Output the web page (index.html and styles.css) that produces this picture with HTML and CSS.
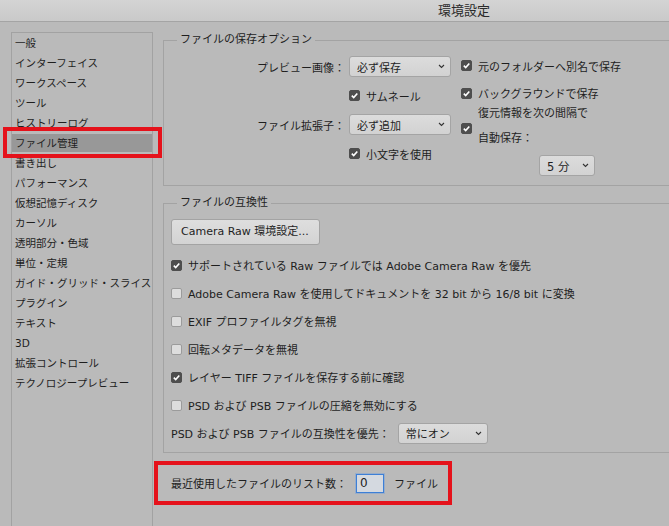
FILE: index.html
```html
<!DOCTYPE html>
<html>
<head>
    <title>環境設定</title>
    <link rel="stylesheet" href="styles.css">
</head>
<body>
    <div class="titlebar"><span class="title">環境設定</span></div>
    <div class="main">
        <ul class="sidebar">
            <li>一般</li>
            <li>インターフェイス</li>
            <li>ワークスペース</li>
            <li>ツール</li>
            <li>ヒストリーログ</li>
            <li class="active">ファイル管理</li>
            <li>書き出し</li>
            <li>パフォーマンス</li>
            <li>仮想記憶ディスク</li>
            <li>カーソル</li>
            <li>透明部分・色域</li>
            <li>単位・定規</li>
            <li>ガイド・グリッド・スライス</li>
            <li>プラグイン</li>
            <li>テキスト</li>
            <li>3D</li>
            <li>拡張コントロール</li>
            <li>テクノロジープレビュー</li>
        </ul>

        <div class="content">
            <!-- save options -->
            <fieldset class="group">
                <legend>ファイルの保存オプション</legend>
                <div class="save-body">
                    <div class="save-left">
                        <span class="field-label">プレビュー画像：</span>
                        <div class="select"><span>必ず保存</span><svg class="chev" width="7" height="5" viewBox="0 0 7 5"><path d="M1 1l2.5 2.5L6 1" fill="none" stroke="#333" stroke-width="1.1"/></svg></div>
                        <span></span>
                        <label class="check"><span class="box on"><svg width="11" height="11" viewBox="0 0 11 11"><path d="M2.8 5.6l1.9 1.9 3.6-4" fill="none" stroke="#fff" stroke-width="1.6"/></svg></span>サムネール</label>
                        <span class="field-label">ファイル拡張子：</span>
                        <div class="select"><span>必ず追加</span><svg class="chev" width="7" height="5" viewBox="0 0 7 5"><path d="M1 1l2.5 2.5L6 1" fill="none" stroke="#333" stroke-width="1.1"/></svg></div>
                        <span></span>
                        <label class="check"><span class="box on"><svg width="11" height="11" viewBox="0 0 11 11"><path d="M2.8 5.6l1.9 1.9 3.6-4" fill="none" stroke="#fff" stroke-width="1.6"/></svg></span>小文字を使用</label>
                    </div>
                    <div class="save-right">
                        <label class="check r1"><span class="box on"><svg width="11" height="11" viewBox="0 0 11 11"><path d="M2.8 5.6l1.9 1.9 3.6-4" fill="none" stroke="#fff" stroke-width="1.6"/></svg></span>元のフォルダーへ別名で保存</label>
                        <label class="check r2"><span class="box on"><svg width="11" height="11" viewBox="0 0 11 11"><path d="M2.8 5.6l1.9 1.9 3.6-4" fill="none" stroke="#fff" stroke-width="1.6"/></svg></span>バックグラウンドで保存</label>
                        <label class="check r3"><span class="box on"><svg width="11" height="11" viewBox="0 0 11 11"><path d="M2.8 5.6l1.9 1.9 3.6-4" fill="none" stroke="#fff" stroke-width="1.6"/></svg></span><span>復元情報を次の間隔で<br>自動保存：</span></label>
                        <div class="select small"><span>5 分</span><svg class="chev" width="7" height="5" viewBox="0 0 7 5"><path d="M1 1l2.5 2.5L6 1" fill="none" stroke="#333" stroke-width="1.1"/></svg></div>
                    </div>
                </div>
            </fieldset>

            <!-- compatibility -->
            <fieldset class="group compat">
                <legend>ファイルの互換性</legend>
                <div class="compat-body">
                    <div class="button">Camera Raw 環境設定...</div>
                    <div class="rows">
                        <label class="check row"><span class="box on"><svg width="11" height="11" viewBox="0 0 11 11"><path d="M2.8 5.6l1.9 1.9 3.6-4" fill="none" stroke="#fff" stroke-width="1.6"/></svg></span>サポートされている Raw ファイルでは Adobe Camera Raw を優先</label>
                        <label class="check row"><span class="box"></span>Adobe Camera Raw を使用してドキュメントを 32 bit から 16/8 bit に変換</label>
                        <label class="check row"><span class="box"></span>EXIF プロファイルタグを無視</label>
                        <label class="check row"><span class="box"></span>回転メタデータを無視</label>
                        <label class="check row"><span class="box on"><svg width="11" height="11" viewBox="0 0 11 11"><path d="M2.8 5.6l1.9 1.9 3.6-4" fill="none" stroke="#fff" stroke-width="1.6"/></svg></span>レイヤー TIFF ファイルを保存する前に確認</label>
                        <label class="check row"><span class="box"></span>PSD および PSB ファイルの圧縮を無効にする</label>
                        <div class="row">
                            <span>PSD および PSB ファイルの互換性を優先：</span>
                            <div class="select psd"><span>常にオン</span><svg class="chev" width="7" height="5" viewBox="0 0 7 5"><path d="M1 1l2.5 2.5L6 1" fill="none" stroke="#333" stroke-width="1.1"/></svg></div>
                        </div>
                    </div>
                </div>
            </fieldset>

            <div class="recent">
                <span>最近使用したファイルのリスト数：</span>
                <span class="num-input">0</span>
                <span class="unit">ファイル</span>
            </div>
        </div>
    </div>
</body>
</html>
```

FILE: styles.css
```css
html, body { margin: 0; padding: 0; overflow: hidden; }
body { width: 669px; height: 526px; background: #bababa; color: #1e1e1e; font-family: "DejaVu Sans", "Noto Sans CJK JP", sans-serif; font-size: 11px; }

.titlebar { height: 21px; border-bottom: 1px solid #a4a4a4; background: linear-gradient(#d4d4d4, #c9c9c9); }
.title { display: block; padding-left: 438px; line-height: 22px; font-size: 13px; color: #2a2a2a; }

.main { display: flex; height: 504px; padding-top: 10px; box-sizing: border-box; }

.sidebar { list-style: none; margin: 0 0 0 11px; padding: 1px 0 0 0; width: 142px; box-sizing: border-box; border: 1px solid #a2a2a2; border-bottom: none; font-size: 10.5px; flex-shrink: 0; }
.sidebar li { position: relative; height: 18px; line-height: 18px; margin-bottom: 2px; padding-left: 3px; white-space: nowrap; }
.sidebar li.active { background: #989898; }
.sidebar li.active::after { content: ""; position: absolute; top: -7px; bottom: -6px; left: -9px; right: -10px; border: 4px solid #e5121b; }

.content { flex: 1; min-width: 0; }

.group { margin: 0 -10px 0 10px; padding: 0; border: 1px solid #a3a3a3; min-width: 0; }
.group legend { margin-left: 13px; padding: 0 3px; line-height: 16px; font-size: 11px; }

.save-body { display: flex; padding: 8px 0 9px 0; }
.save-left { display: grid; grid-template-columns: 181px 102px; grid-template-rows: 21px 37px 21px 37px; column-gap: 4px; align-items: center; }
.field-label { text-align: right; white-space: nowrap; }
.save-right { margin-left: 10px; display: flex; flex-direction: column; align-items: flex-start; }
.save-right .r1 { height: 19px; }
.save-right .r2 { height: 20px; margin-top: 8px; }
.save-right .r3 { margin-top: -2px; line-height: 25px; }
.save-right .r3 .box { margin-top: 4px; }

.select { display: flex; align-items: center; justify-content: space-between; height: 21px; box-sizing: border-box; border: 1px solid #a4a4a4; border-radius: 3px; background: linear-gradient(#dcdcdc, #d2d2d2); padding: 0 5px 0 7px; white-space: nowrap; }
.select.small { width: 56px; margin: 4px 0 0 78px; font-size: 11.5px; }
.select.psd { width: 90px; margin-left: 8px; }
.chev { display: block; }

.check { display: flex; align-items: center; white-space: nowrap; }
.box { display: inline-block; width: 11px; height: 11px; box-sizing: border-box; border: 1px solid #9b9b9b; border-radius: 2px; background: #dddddd; margin-right: 6px; flex-shrink: 0; }
.box svg { display: block; margin: -1px; }
.box.on { background: #4e4e4e; border-color: #4e4e4e; }

.compat { margin-top: 9px; }
.compat-body { padding: 8px 0 5px 7px; }
.button { display: inline-block; width: 149px; height: 26px; line-height: 24px; box-sizing: border-box; padding-left: 9px; border: 1px solid #a3a3a3; border-radius: 3px; background: linear-gradient(#dedede, #d3d3d3); white-space: nowrap; }
.rows { margin-top: 6px; }
.row { display: flex; align-items: center; height: 28px; white-space: nowrap; }

.recent { display: flex; align-items: center; width: 298px; height: 44px; box-sizing: border-box; margin: 8px 0 0 1px; padding-left: 13px; border: 4px solid #e5121b; white-space: nowrap; }
.num-input { width: 28px; height: 19px; box-sizing: border-box; margin-left: 9px; padding-left: 3px; line-height: 17px; font-size: 12px; border: 1px solid #3d7fd6; background: #d4d9e0; box-shadow: 0 0 0 1px rgba(90, 150, 230, 0.35); }
.unit { margin-left: 10px; }
```
